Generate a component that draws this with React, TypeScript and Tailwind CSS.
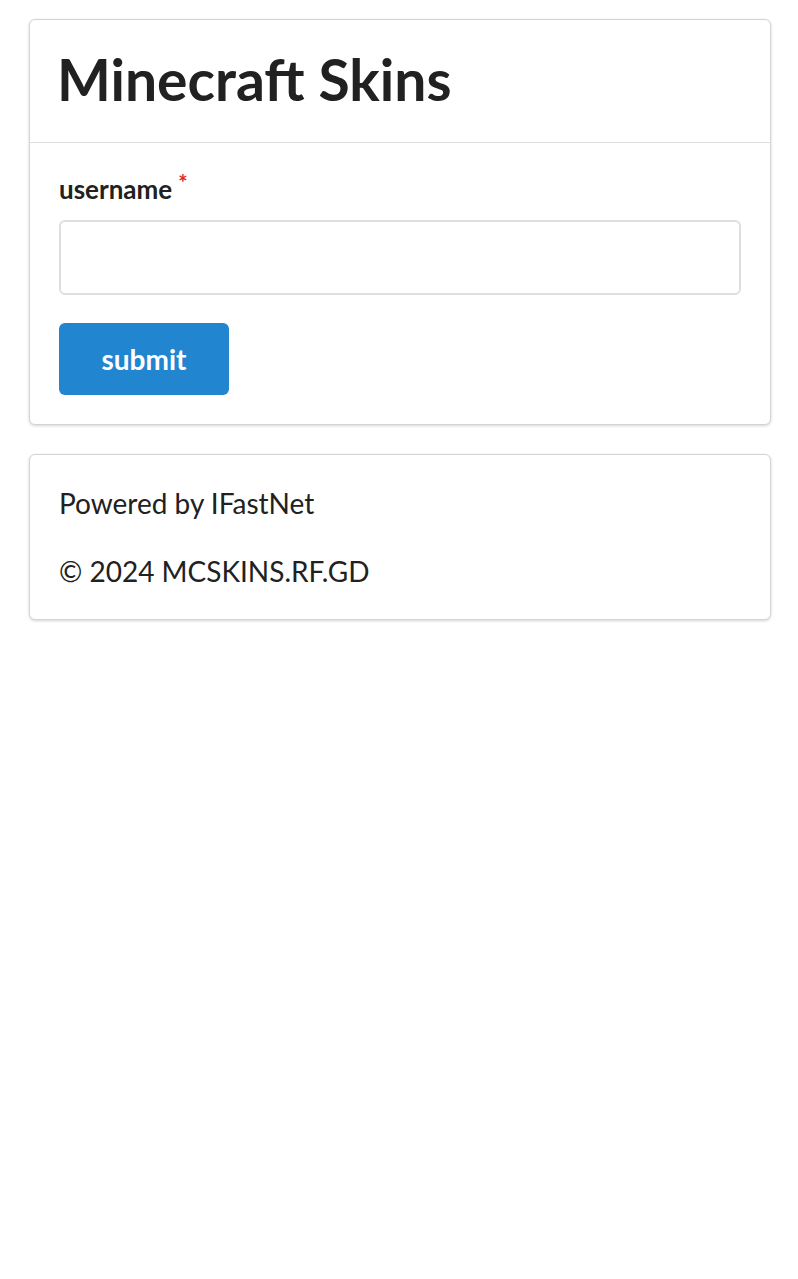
export default function App() {
  return (
    <div className="min-h-[1279px] bg-white pl-[29px] pr-[27px] pt-[19px] text-[#212121]" style={{ fontFamily: 'Lato, "Liberation Sans", sans-serif' }}>
      <div className="rounded-[6px] border border-[#d4d4d5] bg-white shadow-[0_1px_3px_0_#d4d4d5]">
        <div className="border-b border-[#dedede] px-[27px] pt-[25px] pb-[29px]">
          <h1 className="text-[57px] font-bold leading-[68px]">Minecraft Skins</h1>
        </div>
        <div className="px-[29px] pt-[29px] pb-[29px]">
          <label className="flex items-start text-[26px] font-bold leading-[34px]">
            username
            <span className="ml-[6px] -mt-[6px] text-[22px] text-[#db2828]">*</span>
          </label>
          <input
            type="text"
            className="mt-[14px] block h-[75px] w-full rounded-[6px] border-2 border-[#dedede] px-4 text-[22px] outline-none"
          />
          <button className="mt-[28px] h-[72px] w-[170px] rounded-[6px] bg-[#2185d0] text-[28px] font-bold text-white">
            submit
          </button>
        </div>
      </div>

      <div className="mt-[29px] rounded-[6px] border border-[#d4d4d5] bg-white px-[29px] py-[28px] shadow-[0_1px_3px_0_#d4d4d5]">
        <p className="text-[28px] leading-[40px]">Powered by IFastNet</p>
        <p className="mt-[28px] text-[28px] leading-[40px]">© 2024 MCSKINS.RF.GD</p>
      </div>
    </div>
  )
}
